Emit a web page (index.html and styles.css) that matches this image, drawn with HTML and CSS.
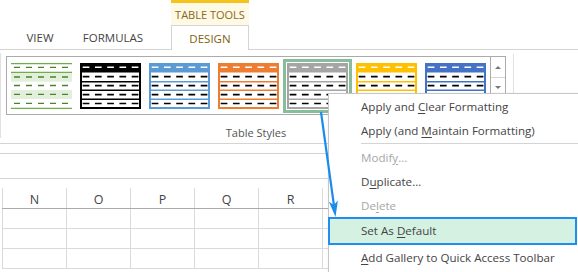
FILE: index.html
```html
<!DOCTYPE html>
<html>
<head>
<meta charset="utf-8">
<link rel="stylesheet" href="styles.css">
</head>
<body>
<div class="app">
  <div class="context-row"><div class="context-tab">TABLE TOOLS</div></div>
  <div class="tabs">
    <div class="tab tab-view">VIEW</div>
    <div class="tab tab-formulas">FORMULAS</div>
    <div class="tab tab-design">DESIGN</div>
  </div>
  <div class="ribbon">
    <div class="lead-sep"></div>
    <div class="group">
      <div class="gallery">
        <div class="items">
          <div class="item">
            <svg class="thumb" viewBox="0 0 61 46" width="61" height="46">
              <rect x="0" y="9.7" width="61" height="9" fill="#e2efda"/>
              <rect x="0" y="27" width="61" height="9" fill="#e2efda"/>
              <path d="M0 0.6H61M0 9.3H61M0 45.3H61" stroke="#70ad47" stroke-width="1.3"/>
              <path d="M3 4.4H61M3 14H61M3 22.5H61M3 31.3H61M3 40.3H61" stroke="#4f7f31" stroke-width="1.3" stroke-dasharray="6 6"/>
            </svg>
          </div>
          <div class="item">
            <svg class="thumb c-black" viewBox="0 0 61 46" width="61" height="46">
              <rect x="0" y="0" width="61" height="9.5" fill="currentColor"/>
              <rect x="1" y="1" width="59" height="44" fill="none" stroke="currentColor" stroke-width="2"/>
              <path d="M0 18.8H61M0 27.3H61M0 36.3H61" stroke="currentColor" stroke-width="1.5"/>
              <path d="M2.7 4.2H61" stroke="#fff" stroke-width="1.6" stroke-dasharray="6.7 5.55"/>
              <path d="M2.7 13.6H61M2.7 22.6H61M2.7 31.6H61M2.7 40.5H61" stroke="#000" stroke-width="1.6" stroke-dasharray="6.7 5.55"/>
            </svg>
          </div>
          <div class="item">
            <svg class="thumb c-blue" viewBox="0 0 61 46" width="61" height="46">
              <rect x="0" y="0" width="61" height="9.5" fill="currentColor"/>
              <rect x="1" y="1" width="59" height="44" fill="none" stroke="currentColor" stroke-width="2"/>
              <path d="M0 18.8H61M0 27.3H61M0 36.3H61" stroke="currentColor" stroke-width="1.5"/>
              <path d="M2.7 4.2H61" stroke="#fff" stroke-width="1.6" stroke-dasharray="6.7 5.55"/>
              <path d="M2.7 13.6H61M2.7 22.6H61M2.7 31.6H61M2.7 40.5H61" stroke="#000" stroke-width="1.6" stroke-dasharray="6.7 5.55"/>
            </svg>
          </div>
          <div class="item">
            <svg class="thumb c-orange" viewBox="0 0 61 46" width="61" height="46">
              <rect x="0" y="0" width="61" height="9.5" fill="currentColor"/>
              <rect x="1" y="1" width="59" height="44" fill="none" stroke="currentColor" stroke-width="2"/>
              <path d="M0 18.8H61M0 27.3H61M0 36.3H61" stroke="currentColor" stroke-width="1.5"/>
              <path d="M2.7 4.2H61" stroke="#fff" stroke-width="1.6" stroke-dasharray="6.7 5.55"/>
              <path d="M2.7 13.6H61M2.7 22.6H61M2.7 31.6H61M2.7 40.5H61" stroke="#000" stroke-width="1.6" stroke-dasharray="6.7 5.55"/>
            </svg>
          </div>
          <div class="item sel">
            <svg class="thumb c-gray" viewBox="0 0 61 46" width="61" height="46">
              <rect x="0" y="0" width="61" height="9.5" fill="currentColor"/>
              <rect x="1" y="1" width="59" height="44" fill="none" stroke="currentColor" stroke-width="2"/>
              <path d="M0 18.8H61M0 27.3H61M0 36.3H61" stroke="currentColor" stroke-width="1.5"/>
              <path d="M2.7 4.2H61" stroke="#fff" stroke-width="1.6" stroke-dasharray="6.7 5.55"/>
              <path d="M2.7 13.6H61M2.7 22.6H61M2.7 31.6H61M2.7 40.5H61" stroke="#000" stroke-width="1.6" stroke-dasharray="6.7 5.55"/>
            </svg>
          </div>
          <div class="item">
            <svg class="thumb c-gold" viewBox="0 0 61 46" width="61" height="46">
              <rect x="0" y="0" width="61" height="9.5" fill="currentColor"/>
              <rect x="1" y="1" width="59" height="44" fill="none" stroke="currentColor" stroke-width="2"/>
              <path d="M0 18.8H61M0 27.3H61M0 36.3H61" stroke="currentColor" stroke-width="1.5"/>
              <path d="M2.7 4.2H61" stroke="#fff" stroke-width="1.6" stroke-dasharray="6.7 5.55"/>
              <path d="M2.7 13.6H61M2.7 22.6H61M2.7 31.6H61M2.7 40.5H61" stroke="#000" stroke-width="1.6" stroke-dasharray="6.7 5.55"/>
            </svg>
          </div>
          <div class="item">
            <svg class="thumb c-navy" viewBox="0 0 61 46" width="61" height="46">
              <rect x="0" y="0" width="61" height="9.5" fill="currentColor"/>
              <rect x="1" y="1" width="59" height="44" fill="none" stroke="currentColor" stroke-width="2"/>
              <path d="M0 18.8H61M0 27.3H61M0 36.3H61" stroke="currentColor" stroke-width="1.5"/>
              <path d="M2.7 4.2H61" stroke="#fff" stroke-width="1.6" stroke-dasharray="6.7 5.55"/>
              <path d="M2.7 13.6H61M2.7 22.6H61M2.7 31.6H61M2.7 40.5H61" stroke="#000" stroke-width="1.6" stroke-dasharray="6.7 5.55"/>
            </svg>
          </div>
        </div>
        <div class="scroller">
          <div class="sbtn up"></div>
          <div class="sbtn down"></div>
          <div class="sbtn more"></div>
        </div>
      </div>
      <div class="group-label">Table Styles</div>
    </div>
    <div class="group-sep"></div>
  </div>
  <div class="formula-gap"></div>
  <div class="formula-bar"></div>
  <div class="sheet">
    <div class="colhead">
      <div class="hc">N</div><div class="hc">O</div><div class="hc">P</div><div class="hc">Q</div><div class="hc">R</div><div class="hc"></div>
    </div>
    <div class="row"><div class="c"></div><div class="c"></div><div class="c"></div><div class="c"></div><div class="c"></div><div class="c"></div></div>
    <div class="row"><div class="c"></div><div class="c"></div><div class="c"></div><div class="c"></div><div class="c"></div><div class="c"></div></div>
    <div class="row"><div class="c"></div><div class="c"></div><div class="c"></div><div class="c"></div><div class="c"></div><div class="c"></div></div>
  </div>
</div>

<div class="menu">
  <div class="mi">Apply and <u>C</u>lear Formatting</div>
  <div class="mi">Apply (and <u>M</u>aintain Formatting)</div>
  <div class="msep"></div>
  <div class="mi dis">Modif<u>y</u>...</div>
  <div class="mi">D<u>u</u>plicate...</div>
  <div class="mi dis short">De<u>l</u>ete</div>
  <div class="mi hl">Set As <u>D</u>efault</div>
  <div class="mi last"><u>A</u>dd Gallery to Quick Access Toolbar</div>
</div>

<svg class="arrow" viewBox="0 0 578 272" width="578" height="272">
  <path d="M321 112L333.9 205" stroke="#1a8ceb" stroke-width="2.2" fill="none"/>
  <polygon points="335.5,217 337.9,200.5 333.9,205 328.9,201.7" fill="#1a8ceb"/>
</svg>
</body>
</html>
```

FILE: styles.css
```css
* { box-sizing: border-box; margin: 0; padding: 0; }
html, body { width: 578px; height: 272px; overflow: hidden; background: #fff; }
body { position: relative; font-family: "Open Sans", "Noto Sans", sans-serif; color: #444; }

.context-row { height: 25px; display: flex; padding-left: 171px; }
.context-tab {
  width: 78px; height: 25px;
  border-top: 3px solid #f4c31c;
  background: #fef9e5;
  color: #86691a;
  font-size: 11px;
  display: flex; align-items: center; justify-content: center;
}

.tabs { height: 25px; display: flex; padding-left: 14px; border-bottom: 1px solid #d4d4d4; }
.tab { height: 24px; display: flex; align-items: center; justify-content: center; font-size: 11.5px; color: #444; }
.tab-view { width: 52px; }
.tab-formulas { width: 66px; margin-left: 14px; }
.tab-design {
  width: 78px; margin-left: 25px; height: 25px; margin-bottom: -1px;
  border: 1px solid #d4d4d4; border-bottom: none;
  background: #fff; color: #7d5f0e;
}

.ribbon { height: 94px; border-bottom: 1px solid #d4d4d4; display: flex; align-items: flex-start; }
.lead-sep { width: 1px; height: 85px; margin-top: 3px; background: #e1e1e1; }
.group { margin-left: 5px; margin-top: 6px; width: 500px; }
.gallery { width: 500px; height: 59px; border: 1px solid #ababab; display: flex; }
.items { width: 483px; display: flex; padding-top: 2px; }
.item { width: 69px; height: 54px; padding: 4px; flex: none; }
.item.sel { border: 3px solid #88bd9c; padding: 1px; }
.thumb { display: block; }
.c-black { color: #000; }
.c-blue { color: #5b9bd5; }
.c-orange { color: #ed7d31; }
.c-gray { color: #a5a5a5; }
.c-gold { color: #ffc000; }
.c-navy { color: #4472c4; }

.scroller { width: 15px; border-left: 1px solid #ababab; display: flex; flex-direction: column; }
.sbtn { height: 21px; border-bottom: 1px solid #d4d4d4; display: flex; align-items: center; justify-content: center; }
.sbtn.down { height: 20px; }
.sbtn.more { flex: 1; border-bottom: none; }
.sbtn.up::before { content: ""; border-left: 3px solid transparent; border-right: 3px solid transparent; border-bottom: 3px solid #777; }
.sbtn.down::before { content: ""; border-left: 3px solid transparent; border-right: 3px solid transparent; border-top: 3px solid #777; }
.group-label { margin-top: 10px; height: 16px; line-height: 16px; text-align: center; font-size: 11px; color: #555; }
.group-sep { width: 1px; height: 84px; margin-left: 7px; margin-top: 4px; background: #e1e1e1; }

.formula-gap { height: 10px; border-bottom: 1px solid #d4d4d4; }
.formula-bar { height: 25px; border-bottom: 1px solid #d4d4d4; }

.sheet { margin-top: 9px; padding-left: 2px; }
.colhead { display: grid; grid-template-columns: repeat(6, 64px); height: 21px; border-bottom: 1px solid #ababab; }
.hc { border-left: 1px solid #dadada; display: flex; align-items: center; justify-content: center; font-size: 12.5px; color: #444; padding-top: 2px; }
.row { display: grid; grid-template-columns: repeat(6, 64px); height: 20px; border-bottom: 1px solid #dadada; }
.c { border-left: 1px solid #dadada; }

.menu {
  position: absolute; left: 328px; top: 93px;
  width: 252px; height: 186px;
  background: #fff;
  border: 1px solid #c6c6c6;
  box-shadow: 2px 2px 4px rgba(0,0,0,0.18);
  padding-top: 1px;
  font-size: 11.6px; color: #444;
}
.mi { display: block; height: 24px; line-height: 24px; padding-left: 32px; white-space: nowrap; }
.mi u { text-decoration: underline; text-underline-offset: 2px; }
.mi.dis { color: #a6a6a6; }
.mi.short { height: 23px; line-height: 23px; }
.msep { height: 1px; background: #d4d4d4; margin: 0 0 2px 32px; }
.mi.hl {
  height: 28px; line-height: 24px; width: 249px; margin-left: -1px;
  border: 2px solid #1e8ef0;
  background: #d5f1e2;
  padding-left: 31px;
}
.mi.last { margin-top: 1px; }

.arrow { position: absolute; left: 0; top: 0; pointer-events: none; }
```
